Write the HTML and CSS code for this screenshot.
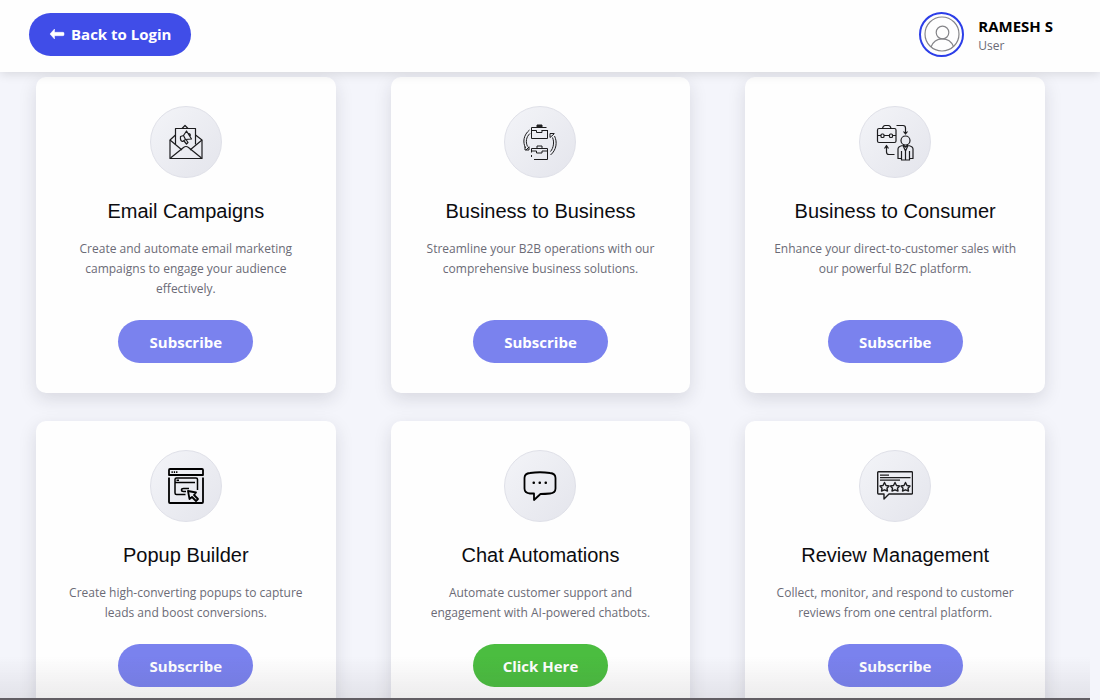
FILE: index.html
```html
<!DOCTYPE html>
<html lang="en">
<head>
    <meta charset="UTF-8">
    <meta name="viewport" content="width=device-width, initial-scale=1.0">
    <title>Services</title>
    <link rel="stylesheet" href="styles.css">
</head>
<body>
    <header class="header">
        <button type="button" class="btn btn-back">
            <svg width="16" height="12" viewBox="0 0 16 12" aria-hidden="true"><path d="M1 6 L5.500 1 V4.300 H14 Q15 4.300 15 5.300 V6.700 Q15 7.700 14 7.700 H5.500 V11 Z" fill="#fff" stroke="#fff" stroke-width=".5" stroke-linejoin="round"/></svg>
            Back to Login
        </button>
        <div class="user">
            <div class="user-avatar">
                <svg width="36" height="36" viewBox="0 0 36 36" fill="none" stroke="#858589" stroke-width="1.2" aria-hidden="true">
                    <circle cx="18" cy="18" r="17"/>
                    <circle cx="18.5" cy="16.5" r="6.3"/>
                    <path d="M7 31 C9 25.5 13 22.8 18.3 22.8 S27.500 25.500 29.500 30.500"/>
                </svg>
            </div>
            <div class="user-info">
                <div class="user-name">RAMESH S</div>
                <div class="user-role">User</div>
            </div>
        </div>
    </header>

    <main class="content">
        <div class="services">
            <section class="card">
                <div class="card-icon">
                    <svg width="36" height="36" viewBox="0 0 36 36" class="icon" aria-hidden="true">
                        <path d="M7.500 20.500 V4.500 H27.500 V20.500"/>
                        <path d="M14 4.500 L17 1.500 L20 4.500"/>
                        <path d="M7.500 11 L2 16 V34.500 H34 V16 L27.500 11"/>
                        <path d="M2 16 L14 26 M34 16 L22 26 M2.500 34 L15.500 23.500 Q18 21.500 20.500 23.500 L33.500 34"/>
                        <path d="M12.500 12.500 L15.500 11.500 L18.500 7 L23.500 15 L17.500 15.500 L14.500 17.500 Q12 17 12.500 12.500 Z M15.500 11.500 L17.500 15.500 M16 17 L18.500 20 L20 18.500 L18 15.500 M20.500 9.500 Q23 9.500 22 12.500"/>
                    </svg>
                </div>
                <h2 class="card-title">Email Campaigns</h2>
                <p class="card-text">Create and automate email marketing campaigns to engage your audience effectively.</p>
                <button type="button" class="btn btn-subscribe">Subscribe</button>
            </section>

            <section class="card">
                <div class="card-icon">
                    <svg width="36" height="36" viewBox="0 0 36 36" class="icon icon-thin" aria-hidden="true">
                        <!-- top briefcase -->
                        <path d="M24.500 3.500 H9.500 V14.500 H25.500 V6"/>
                        <path d="M9.500 6.500 H14.500 M19.500 6.500 H25.500 M14.500 6.500 V8.500 H20 V6.500"/>
                        <path d="M15 3.500 V1 H20 V3.500 Z" fill="#222"/>
                        <!-- bottom briefcase -->
                        <path d="M9.500 33 V31 M9.500 28.500 V24.500 H25.500 V35.500 H12"/>
                        <path d="M9.500 27 H14.500 M20 27 H25.500 M14.500 27 V29 H20 V27 M15 24.500 V22 H20 V24.500 Z"/>
                        <!-- arrows -->
                        <path d="M7.500 6 C1.500 11 .5 18 3.500 24 M8 9.500 C4 13 3.500 18 5.500 22.500"/>
                        <path d="M28.500 31 C34.500 26 35.500 18 32.500 12 M28.500 27.500 C31.500 24 32.500 18 30.500 13.500"/>
                        <path d="M3 22.500 V26 H7 V22.500 M28 13.500 V9.500 H32.500 M4 26 L7 23 M28 13.500 L32 10"/>
                    </svg>
                </div>
                <h2 class="card-title">Business to Business</h2>
                <p class="card-text">Streamline your B2B operations with our comprehensive business solutions.</p>
                <button type="button" class="btn btn-subscribe">Subscribe</button>
            </section>

            <section class="card">
                <div class="card-icon">
                    <svg width="38" height="38" viewBox="0 0 38 38" class="icon" aria-hidden="true">
                        <rect x="1.500" y="5.500" width="18.500" height="14" rx="1.500"/>
                        <path d="M6.500 5.500 Q7 2.500 9 2.500 H12.500 Q14.500 2.500 15 5.500 M1.500 12.500 H5 M8 12.500 H13 M16 12.500 H20"/>
                        <rect x="5" y="11" width="3" height="3.500" rx="1"/>
                        <rect x="13.500" y="11" width="3" height="3.500" rx="1"/>
                        <path d="M20.500 2.500 H27 Q29.500 2.500 29.500 5 V10 M27.500 8.500 L29.500 11 L31.500 8.500"/>
                        <path d="M18.500 31.500 H13 Q10.500 31.500 10.500 29 V23 M8.500 25.500 L10.500 22.500 L12.500 25.500"/>
                        <circle cx="29.500" cy="17.500" r="4.500"/>
                        <path d="M27 21.500 L29.500 24 L32 21.500 M26.500 22.500 Q22 23.500 22 26 V35.500 H25.500 V28 M32.500 22.500 Q37 23.500 37 26 V35.500 H33.500 V28 M25.500 35.500 V37 H33.500 V35.500 M27 22.500 L29.500 28 V36.500 M32 22.500 L29.500 28"/>
                    </svg>
                </div>
                <h2 class="card-title">Business to Consumer</h2>
                <p class="card-text">Enhance your direct-to-customer sales with our powerful B2C platform.</p>
                <button type="button" class="btn btn-subscribe">Subscribe</button>
            </section>

            <section class="card">
                <div class="card-icon">
                    <svg width="36" height="36" viewBox="0 0 36 36" class="icon icon-bold" aria-hidden="true">
                        <path d="M1 9.500 V34 Q1 35 2 35 H34 Q35 35 35 34 V9.500"/>
                        <path d="M1 7 V2 Q1 1 2 1 H34 Q35 1 35 2 V7 Z"/>
                        <path d="M3.500 4.200 H9.500" stroke-dasharray="1.300 1"/>
                        <path d="M17.500 26.500 H8.500 Q7 26.500 7 25 V11.500 Q7 10 8.500 10 H28 Q29.500 10 29.500 11.500 V22 M7 14.500 H27 M8.500 12.300 H11" stroke-width="1.500"/>
                        <path d="M21 20.500 H15.500 Q13.500 20.500 13.500 22 T15.500 23.500 H18" stroke-width="1.500"/>
                        <path d="M20 23 L28 24.500 L26 27 L30 31 L28 33 L24 29 L21.500 31 Z" fill="#e9ebf0"/>
                    </svg>
                </div>
                <h2 class="card-title">Popup Builder</h2>
                <p class="card-text">Create high-converting popups to capture leads and boost conversions.</p>
                <button type="button" class="btn btn-subscribe">Subscribe</button>
            </section>

            <section class="card">
                <div class="card-icon">
                    <svg width="36" height="36" viewBox="0 0 36 36" class="icon icon-bold" aria-hidden="true">
                        <path d="M11.500 25.500 H8 Q2.500 25 2.500 20.500 V10 Q2.500 5.500 8 5 Q18 3.500 28 5 Q33.500 5.500 33.500 10 V20.500 Q33.500 25 28 25.500 Q23 26 18.500 26 L12 32 V25.500 Z"/>
                        <g fill="#000" stroke="none">
                            <rect x="10.500" y="13.500" width="2.500" height="2.500" rx="1"/>
                            <rect x="16.500" y="13.500" width="2.500" height="2.500" rx="1"/>
                            <rect x="22.500" y="13.500" width="2.500" height="2.500" rx="1"/>
                        </g>
                    </svg>
                </div>
                <h2 class="card-title">Chat Automations</h2>
                <p class="card-text">Automate customer support and engagement with AI-powered chatbots.</p>
                <button type="button" class="btn btn-active">Click Here</button>
            </section>

            <section class="card">
                <div class="card-icon">
                    <svg width="36" height="36" viewBox="0 0 36 36" class="icon" aria-hidden="true">
                        <path d="M6 26 H1.500 Q.7 26 .7 25 V4.500 Q.7 3.700 1.500 3.700 H34.500 Q35.500 3.700 35.500 4.500 V25 Q35.500 26 34.500 26 H12 L7 31 V26 Z" stroke-width="1.400"/>
                        <path d="M3 7.200 H12 M3 9.700 H33.500 M3 12.200 H23"/>
                        <g stroke-width="1.400">
                            <path id="star" d="M7.500 14.500 L9 17.500 L12 18 L10 20.300 L10.500 23 L7.500 21.800 L4.500 23 L5 20.300 L3 18 L6 17.500 Z"/>
                            <use href="#star" x="10.500"/>
                            <use href="#star" x="21"/>
                        </g>
                    </svg>
                </div>
                <h2 class="card-title">Review Management</h2>
                <p class="card-text">Collect, monitor, and respond to customer reviews from one central platform.</p>
                <button type="button" class="btn btn-subscribe">Subscribe</button>
            </section>
        </div>
    </main>

    <div class="bottom-shade"></div>
</body>
</html>
```
FILE: styles.css
```css
* {
    margin: 0;
    padding: 0;
    box-sizing: border-box;
}

body {
    font-family: 'Open Sans', 'Noto Sans', sans-serif;
    background: #f4f5fb;
    height: 100vh;
    overflow: hidden;
    display: flex;
    flex-direction: column;
}

.header {
    position: relative;
    z-index: 10;
    flex: none;
    display: flex;
    align-items: center;
    justify-content: space-between;
    height: 72px;
    padding: 0 47px 4px 29px;
    background: #fefefe;
    box-shadow: 0 2px 10px rgba(0, 0, 0, 0.12);
}

.btn {
    display: inline-flex;
    align-items: center;
    justify-content: center;
    height: 43px;
    border: none;
    border-radius: 22px;
    color: #fff;
    font-family: inherit;
    font-size: 15px;
    font-weight: bold;
    cursor: pointer;
}

.btn-back {
    gap: 6px;
    padding: 0 20px;
    background: #404de8;
}

.btn-subscribe,
.btn-active {
    width: 135px;
}

.btn-subscribe {
    background: #7a82ee;
}

.btn-active {
    background: #4bbd40;
}

.user {
    display: flex;
    align-items: center;
    gap: 14px;
}

.user-avatar {
    display: flex;
    align-items: center;
    justify-content: center;
    width: 45px;
    height: 45px;
    border: 2px solid #2c3ee8;
    border-radius: 50%;
}

.user-info {
    padding-top: 4px;
}

.user-name {
    font-size: 15px;
    font-weight: bold;
    line-height: 20px;
    color: #000;
}

.user-role {
    font-size: 12px;
    line-height: 20px;
    color: #6b6b76;
}

.content {
    flex: 1;
    min-height: 0;
    overflow: hidden;
    padding: 5px 55px 28px 36px;
}

.services {
    display: grid;
    grid-template-columns: repeat(3, 1fr);
    gap: 28px 55px;
}

.card {
    display: flex;
    flex-direction: column;
    align-items: center;
    padding: 29px 28px 30px;
    background: #fefefe;
    border-radius: 10px;
    box-shadow: 0 6px 18px rgba(30, 30, 50, 0.13);
    text-align: center;
}

.card-icon {
    display: flex;
    align-items: center;
    justify-content: center;
    width: 72px;
    height: 72px;
    margin-bottom: 20px;
    border: 1px solid #dfe0e8;
    border-radius: 50%;
    background: linear-gradient(135deg, #f3f4f8, #e4e5ec);
}

.icon {
    fill: none;
    stroke: #1c1c1e;
    stroke-width: 1.2;
    stroke-linejoin: round;
}

.icon-thin {
    stroke-width: 1;
}

.icon-bold {
    stroke: #000;
    stroke-width: 1.8;
}

.card-title {
    margin-bottom: 15px;
    font-family: 'Liberation Sans', Arial, sans-serif;
    font-size: 20px;
    font-weight: normal;
    line-height: 26px;
    color: #0c0c10;
}

.card-text {
    flex: 1;
    margin-bottom: 21px;
    font-size: 12px;
    line-height: 20px;
    color: #6b6b76;
}

/* soft fade and dark edge at the foot of the window */
.bottom-shade {
    position: fixed;
    left: 0;
    right: 10px;
    bottom: 0;
    height: 44px;
    border-bottom: 2px solid #625e64;
    background: linear-gradient(to bottom, rgba(60, 50, 60, 0), rgba(60, 50, 60, 0.09));
    pointer-events: none;
}
```
